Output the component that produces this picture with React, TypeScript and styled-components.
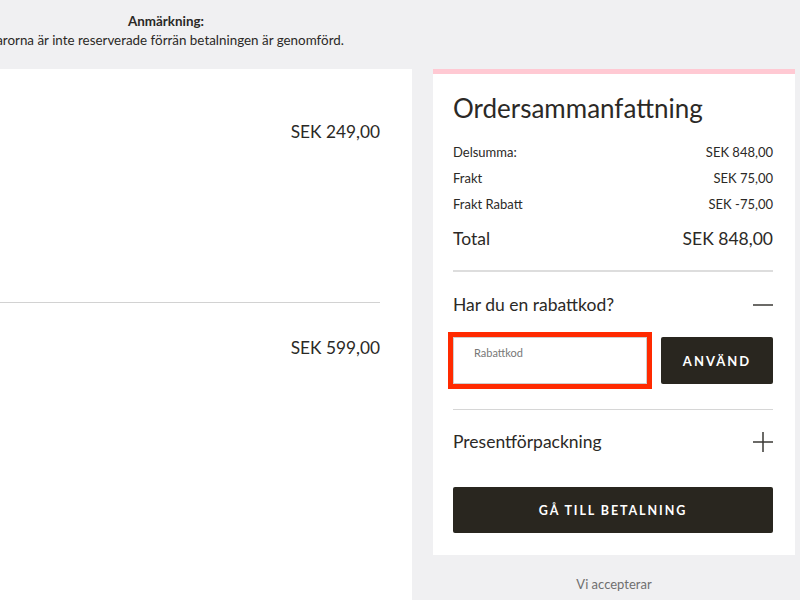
import styled, { createGlobalStyle } from 'styled-components'

const GlobalStyle = createGlobalStyle`
  html, body {
    margin: 0;
    padding: 0;
    background: #f0f0f2;
    overflow: hidden;
  }
  body {
    font-family: Lato, "Open Sans", "Liberation Sans", sans-serif;
    color: #2b2926;
  }
`

function PlusMinus({ open }: { open: boolean }) {
  return (
    <svg width={20} height={20} viewBox="0 0 20 20" fill="none" stroke="#3a3835" strokeWidth={1.5}>
      <line x1={0} y1={10} x2={20} y2={10} />
      {!open && <line x1={10} y1={0} x2={10} y2={20} />}
    </svg>
  )
}

const items = [{ price: 'SEK 249,00' }, { price: 'SEK 599,00' }]

const rows = [
  { label: 'Delsumma:', value: 'SEK 848,00' },
  { label: 'Frakt', value: 'SEK 75,00' },
  { label: 'Frakt Rabatt', value: 'SEK -75,00' },
]

function App() {
  return (
    <>
      <GlobalStyle />
      <Page>
        <Notice>
          <strong>Anmärkning:</strong>
          <span>Varorna är inte reserverade förrän betalningen är genomförd.</span>
        </Notice>
        <ItemsPanel>
          {items.map((it, i) => (
            <ItemRow key={i} $last={i === items.length - 1}>
              <Price>{it.price}</Price>
            </ItemRow>
          ))}
        </ItemsPanel>
        <Side>
          <Summary>
            <SummaryTitle>Ordersammanfattning</SummaryTitle>
            <SumList>
              {rows.map((r) => (
                <SumRow key={r.label}>
                  <span>{r.label}</span>
                  <span>{r.value}</span>
                </SumRow>
              ))}
              <SumRow $total>
                <span>Total</span>
                <span>SEK 848,00</span>
              </SumRow>
            </SumList>
            <Section $thick>
              <SectionHead>
                <span>Har du en rabattkod?</span>
                <PlusMinus open />
              </SectionHead>
              <CodeForm>
                <CodeField>
                  <FieldLabel>Rabattkod</FieldLabel>
                </CodeField>
                <DarkButton $compact>ANVÄND</DarkButton>
              </CodeForm>
            </Section>
            <Section>
              <SectionHead>
                <span>Presentförpackning</span>
                <PlusMinus open={false} />
              </SectionHead>
            </Section>
            <DarkButton>GÅ TILL BETALNING</DarkButton>
          </Summary>
          <Accept>Vi accepterar</Accept>
        </Side>
      </Page>
    </>
  )
}

const Page = styled.div`
  display: grid;
  grid-template-columns: 492px 362px;
  grid-template-rows: 69px auto;
  column-gap: 21px;
  margin-left: -80px;
`
const Notice = styled.div`
  grid-column: 1;
  grid-row: 1;
  display: flex;
  flex-direction: column;
  align-items: center;
  padding-top: 12px;
  font-size: 13.4px;
  line-height: 19px;
  color: #2b2926;
  white-space: nowrap;
  strong {
    font-weight: 700;
  }
`
const ItemsPanel = styled.div`
  grid-column: 1;
  grid-row: 2;
  box-sizing: border-box;
  background: #fff;
  height: 531px;
  padding: 18px 32px 0 0;
`
const ItemRow = styled.div<{ $last?: boolean }>`
  display: flex;
  justify-content: flex-end;
  height: ${(p) => (p.$last ? 'auto' : '180px')};
  padding-top: 35px;
  border-bottom: ${(p) => (p.$last ? 'none' : '1px solid #d2d2d2')};
`
const Price = styled.div`
  font-size: 17.3px;
  line-height: 20px;
  color: #2b2926;
`
const Side = styled.div`
  grid-column: 2;
  grid-row: 2;
  display: flex;
  flex-direction: column;
`
const Summary = styled.div`
  background: #fff;
  border-top: 5px solid #ffc9d3;
  padding: 20px 22px 22px 20px;
`
const SummaryTitle = styled.h1`
  margin: 0;
  font-size: 26px;
  line-height: 29px;
  font-weight: 400;
  color: #2b2926;
`
const SumList = styled.div`
  margin-top: 16px;
  padding-bottom: 16px;
`
const SumRow = styled.div<{ $total?: boolean }>`
  display: flex;
  justify-content: space-between;
  font-size: ${(p) => (p.$total ? '17.5px' : '13px')};
  line-height: ${(p) => (p.$total ? '30px' : '26px')};
  margin-top: ${(p) => (p.$total ? '7px' : '0')};
`
const Section = styled.div<{ $thick?: boolean }>`
  border-top: ${(p) => (p.$thick ? '2px solid #dddddd' : '1px solid #d6d6d6')};
  padding: ${(p) => (p.$thick ? '22px 0 25px' : '21px 0 34px')};
`
const SectionHead = styled.div`
  display: flex;
  justify-content: space-between;
  align-items: center;
  font-size: 17.5px;
  line-height: 22px;
`
const CodeForm = styled.div`
  display: flex;
  gap: 14px;
  margin-top: 21px;
`
const CodeField = styled.div`
  box-sizing: border-box;
  width: 194px;
  height: 47px;
  border: 1px solid #cfcfcf;
  outline: 5px solid #ff2a00;
  padding: 8px 20px;
`
const FieldLabel = styled.div`
  font-size: 11px;
  line-height: 13px;
  color: #777;
`
const DarkButton = styled.button<{ $compact?: boolean }>`
  box-sizing: border-box;
  width: ${(p) => (p.$compact ? '112px' : '100%')};
  height: ${(p) => (p.$compact ? '47px' : '46px')};
  border: none;
  border-radius: 2px;
  background: #29261f;
  color: #fff;
  font-family: Lato, "Open Sans", "Liberation Sans", sans-serif;
  font-size: ${(p) => (p.$compact ? '13px' : '12.5px')};
  font-weight: 700;
  letter-spacing: ${(p) => (p.$compact ? '2px' : '1.9px')};
  cursor: pointer;
`
const Accept = styled.div`
  margin-top: 21px;
  text-align: center;
  font-size: 13px;
  line-height: 16px;
  color: #6f6f6f;
`

export default App
